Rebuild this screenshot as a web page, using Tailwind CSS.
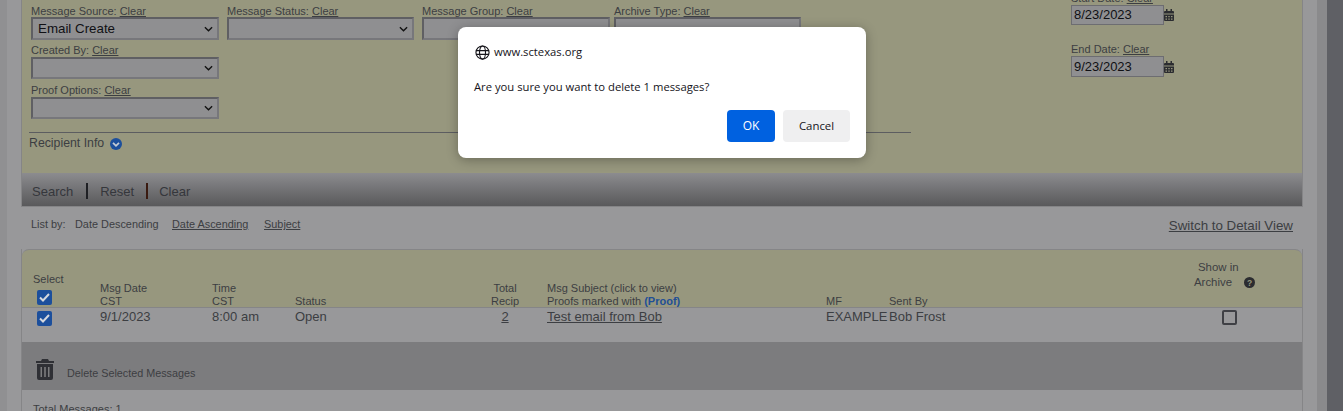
<!DOCTYPE html>
<html lang="en">

<head>
    <meta charset="UTF-8">
    <title>Message Center</title>
    <script src="https://cdn.jsdelivr.net/npm/@tailwindcss/browser@4"></script>
</head>

<body class="h-[411px] overflow-hidden bg-[#98989a] font-['Liberation_Sans',Arial,sans-serif] text-[11px] leading-[13px] text-[#3c3e42]">
    <div class="relative h-[411px] overflow-hidden flex">
        <!-- page column -->
        <div class="w-[7px] bg-[#909092]"></div>
        <div class="w-[1310px] pl-[14px] pr-[14px]">
            <!-- search panel -->
            <div class="w-[1282px] h-[207px] border-r border-b border-l border-[#858587] flex flex-col">
                <div class="h-[173px] bg-[#97977e] pl-[9px] relative flex">
                    <div class="w-[1040px]">
                        <div class="pt-[5px] flex">
                            <div class="w-[196px]">
                                <div class="h-[12px]">Message Source: <a class="underline" href="#">Clear</a></div>
                                <div class="h-[23px] w-[188px] border-2 border-[#5f5f63] border-r-[#77777b] border-b-[#77777b] bg-[#8f8f91] pl-[5px] flex items-center justify-between pr-[4px] text-[13.33px] text-[#101014]">Email Create
                                    <svg class="w-[9px] h-[6px]" viewBox="0 0 10 6" fill="none" stroke="#111" stroke-width="1.500"><path d="M1 1l4 4 4-4"/></svg>
                                </div>
                            </div>
                            <div class="w-[195px]">
                                <div class="h-[12px]">Message Status: <a class="underline" href="#">Clear</a></div>
                                <div class="h-[23px] w-[187px] border-2 border-[#5f5f63] border-r-[#77777b] border-b-[#77777b] bg-[#8f8f91] flex items-center justify-end pr-[4px]">
                                    <svg class="w-[9px] h-[6px]" viewBox="0 0 10 6" fill="none" stroke="#111" stroke-width="1.500"><path d="M1 1l4 4 4-4"/></svg>
                                </div>
                            </div>
                            <div class="w-[192px]">
                                <div class="h-[12px]">Message Group: <a class="underline" href="#">Clear</a></div>
                                <div class="h-[23px] w-[188px] border-2 border-[#5f5f63] border-r-[#77777b] border-b-[#77777b] bg-[#8f8f91]"></div>
                            </div>
                            <div class="w-[187px]">
                                <div class="h-[12px]">Archive Type: <a class="underline" href="#">Clear</a></div>
                                <div class="h-[23px] w-[187px] border-2 border-[#5f5f63] border-r-[#77777b] border-b-[#77777b] bg-[#8f8f91]"></div>
                            </div>
                        </div>
                        <div class="mt-[4px] h-[13px]">Created By: <a class="underline" href="#">Clear</a></div>
                        <div class="h-[22px] w-[188px] border-2 border-[#5f5f63] border-r-[#77777b] border-b-[#77777b] bg-[#8f8f91] flex items-center justify-end pr-[4px]">
                            <svg class="w-[9px] h-[6px]" viewBox="0 0 10 6" fill="none" stroke="#111" stroke-width="1.500"><path d="M1 1l4 4 4-4"/></svg>
                        </div>
                        <div class="mt-[5px] h-[13px]">Proof Options: <a class="underline" href="#">Clear</a></div>
                        <div class="h-[22px] w-[188px] border-2 border-[#5f5f63] border-r-[#77777b] border-b-[#77777b] bg-[#8f8f91] flex items-center justify-end pr-[4px]">
                            <svg class="w-[9px] h-[6px]" viewBox="0 0 10 6" fill="none" stroke="#111" stroke-width="1.500"><path d="M1 1l4 4 4-4"/></svg>
                        </div>
                        <div class="mt-[13px] ml-[-2px] w-[882px] border-t border-[#5c5d60]"></div>
                        <div class="ml-[-2px] mt-[3px] flex items-center gap-[6px] text-[12.3px] leading-[15px]">Recipient Info
                            <svg class="w-[12px] h-[12px] mt-[1px]" viewBox="0 0 12 12"><circle cx="6" cy="6" r="6" fill="#1c4f9c"/><path d="M3 4.800l3 3 3-3" fill="none" stroke="#c5cbd4" stroke-width="1.800"/></svg>
                        </div>
                    </div>
                    <div class="absolute left-[1049px] top-[-8px] text-[11px]">
                        <div>Start Date: <a class="underline" href="#">Clear</a></div>
                        <div class="flex items-start">
                            <div class="h-[20px] w-[93px] border border-[#6d6d71] bg-[#8f8f91] pl-[2px] text-[13px] leading-[18px] text-[#101014]">8/23/2023</div>
                            <svg class="mt-[4px] w-[10px] h-[12px]" viewBox="0 0 10 12" fill="#2b2c30"><path d="M0 3a1 1 0 011-1h1V0h1.500v2h3V0H8v2h1a1 1 0 011 1v1.500H0zM0 5.500h10V11a1 1 0 01-1 1H1a1 1 0 01-1-1zM1.500 7v1.300h1.500V7zm2.800 0v1.300h1.400V7zM7 7v1.300h1.500V7zM1.500 9.500v1.300h1.500V9.500zm2.800 0v1.300h1.400V9.500zm2.700 0v1.300h1.500V9.500z" fill-rule="evenodd"/></svg>
                        </div>
                        <div class="mt-[18px] h-[13px]">End Date: <a class="underline" href="#">Clear</a></div>
                        <div class="flex items-start">
                            <div class="h-[21px] w-[93px] border border-[#6d6d71] bg-[#8f8f91] pl-[2px] text-[13px] leading-[19px] text-[#101014]">9/23/2023</div>
                            <svg class="mt-[5px] w-[10px] h-[12px]" viewBox="0 0 10 12" fill="#2b2c30"><path d="M0 3a1 1 0 011-1h1V0h1.500v2h3V0H8v2h1a1 1 0 011 1v1.500H0zM0 5.500h10V11a1 1 0 01-1 1H1a1 1 0 01-1-1zM1.500 7v1.300h1.500V7zm2.800 0v1.300h1.400V7zM7 7v1.300h1.500V7zM1.500 9.500v1.300h1.500V9.500zm2.800 0v1.300h1.400V9.500zm2.700 0v1.300h1.500V9.500z" fill-rule="evenodd"/></svg>
                        </div>
                    </div>
                </div>
                <div class="h-[33px] bg-gradient-to-b from-[#8c8c8f] to-[#59595b] flex items-center pl-[10px] pt-[3px] text-[13px] text-[#35373c]">
                    <span>Search</span>
                    <span class="ml-[13px] h-[16px] w-[2px] bg-[#1f2024]"></span>
                    <span class="ml-[12px]">Reset</span>
                    <span class="ml-[12px] h-[16px] w-[2px] bg-[#3a1a10]"></span>
                    <span class="ml-[11px]">Clear</span>
                </div>
            </div>

            <div class="h-[42px] flex items-start justify-between pl-[10px] pr-[10px] pt-[11px]">
                <div class="flex text-[10.9px]">
                    <span class="w-[44px]">List by:</span>
                    <span class="w-[97px]">Date Descending</span>
                    <a class="underline w-[92px]" href="#">Date Ascending</a>
                    <a class="underline" href="#">Subject</a>
                </div>
                <a class="underline text-[13.33px] leading-[15px]" href="#">Switch to Detail View</a>
            </div>

            <!-- message table -->
            <div class="w-[1282px] border-x border-[#858587]">
                <div class="h-[59px] rounded-t-[7px] border-t border-b border-[#858587] bg-[#97977e] relative grid grid-cols-[78px_112px_83px_185px_67px_279px_63px_271px_142px] items-end">
                    <div class="pl-[11px] self-end">
                        <div class="mb-[4px]">Select</div>
                        <div class="mb-[2px] ml-[4px] w-[15px] h-[15px] rounded-[2px] bg-[#1c4f9c] flex items-center justify-center">
                            <svg class="w-[11px] h-[9px]" viewBox="0 0 11 9" fill="none" stroke="#d5d8de" stroke-width="2"><path d="M1 4.500l3 3 6-6.500"/></svg>
                        </div>
                    </div>
                    <div class="mb-[-1px]">Msg Date<br>CST</div>
                    <div class="mb-[-1px]">Time<br>CST</div>
                    <div class="mb-[-1px]">Status</div>
                    <div class="mb-[-1px] w-[50px] text-center">Total<br>Recip</div>
                    <div class="mb-[-1px]">Msg Subject (click to view)<br>Proofs marked with <b class="text-[#1f4f96]">(Proof)</b></div>
                    <div class="mb-[-1px]">MF</div>
                    <div class="mb-[-1px]">Sent By</div>
                    <div></div>
                    <div class="absolute left-[1172px] top-[10px] leading-[15px] text-[11.4px]">
                        <div class="ml-[4px]">Show in</div>
                        <div class="flex items-center gap-[12px]">Archive
                            <svg class="w-[11px] h-[11px]" viewBox="0 0 11 11"><circle cx="5.500" cy="5.500" r="5.500" fill="#2b2c30"/><text x="5.500" y="8.500" font-size="8.500" font-weight="700" text-anchor="middle" fill="#97977e" font-family="Liberation Sans">?</text></svg>
                        </div>
                    </div>
                </div>
                <div class="h-[34px] grid grid-cols-[78px_112px_83px_185px_67px_279px_63px_271px_142px] text-[13px] leading-[15px] pt-[1px]">
                    <div class="pl-[15px]">
                        <div class="w-[15px] h-[15px] mt-[2px] rounded-[2px] bg-[#1c4f9c] flex items-center justify-center">
                            <svg class="w-[11px] h-[9px]" viewBox="0 0 11 9" fill="none" stroke="#d5d8de" stroke-width="2"><path d="M1 4.500l3 3 6-6.500"/></svg>
                        </div>
                    </div>
                    <div>9/1/2023</div>
                    <div>8:00 am</div>
                    <div>Open</div>
                    <div class="w-[50px] text-center"><a class="underline" href="#">2</a></div>
                    <div><a class="underline" href="#">Test email from Bob</a></div>
                    <div>EXAMPLE</div>
                    <div>Bob Frost</div>
                    <div class="pl-[62px]"><div class="w-[15px] h-[15px] mt-[1px] rounded-[2px] border-2 border-[#3f4045]"></div></div>
                </div>
                <div class="h-[48px] bg-[#7c7c7e] flex items-start pl-[14px] pt-[17px]">
                    <svg class="w-[18px] h-[21px]" viewBox="0 0 18 21" fill="#2f3035"><path d="M6 0h6l1 2h5v2H0V2h5zM1 5h16v14a2 2 0 01-2 2H3a2 2 0 01-2-2zm3.500 3v10h1.500V8zm3.700 0v10h1.600V8zm3.800 0v10h1.500V8z" fill-rule="evenodd"/></svg>
                    <span class="ml-[13px] mt-[8px] text-[10.8px]">Delete Selected Messages</span>
                </div>
                <div class="pl-[11px] pt-[13px]">Total Messages: 1</div>
            </div>
        </div>
        <div class="w-[10px] bg-[#8a8a8c]"></div>
        <div class="flex-1 bg-[#5f6065]"></div>

        <!-- browser confirm dialog -->
        <div class="absolute left-[458px] top-[27px] w-[408px] h-[131px] rounded-[8px] bg-white shadow-[0_2px_12px_rgba(0,0,0,0.3)] font-['Open_Sans','Noto_Sans',sans-serif] text-[11.25px] leading-[16px] text-[#15141a]">
            <div class="flex items-center gap-[4px] pl-[17px] pt-[17px]">
                <svg class="w-[15px] h-[15px]" viewBox="0 0 16 16" fill="none" stroke="#15141a" stroke-width="1.200"><circle cx="8" cy="8" r="7"/><ellipse cx="8" cy="8" rx="3.200" ry="7"/><path d="M1 6h14M1 10h14"/></svg>
                <span>www.sctexas.org</span>
            </div>
            <div class="pl-[16px] mt-[19px]">Are you sure you want to delete 1 messages?</div>
            <div class="flex justify-end gap-[8px] pr-[16px] mt-[15px]">
                <button class="w-[48px] h-[32px] rounded-[4px] bg-[#0061e0] text-[12px] text-white">OK</button>
                <button class="w-[67px] h-[32px] rounded-[4px] bg-[#efeff0] text-[11.4px] text-[#15141a]">Cancel</button>
            </div>
        </div>
    </div>
</body>

</html>
